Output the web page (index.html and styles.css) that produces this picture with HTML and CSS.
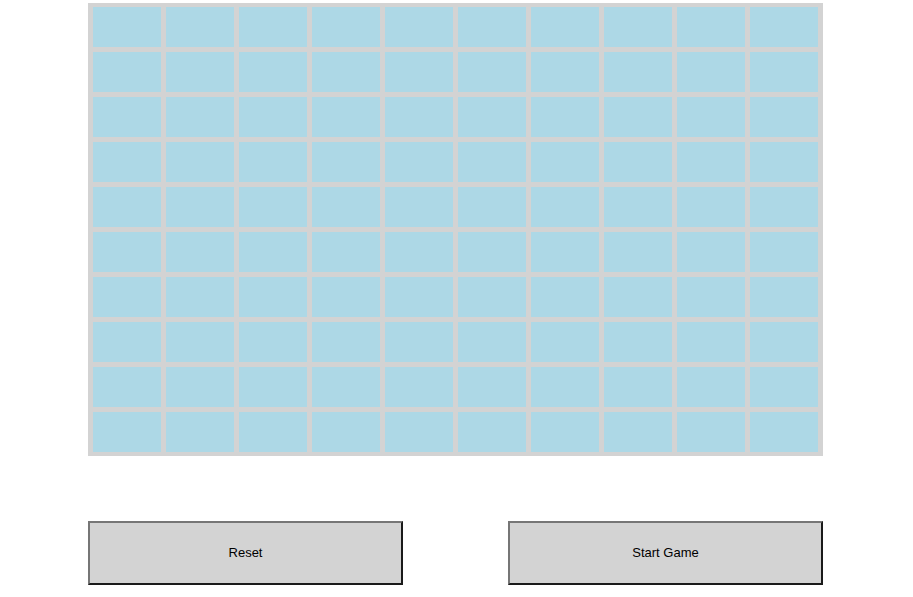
FILE: index.html
```html
<!DOCTYPE html>
<html lang="en">
<head>
<meta charset="UTF-8">
<meta name="viewport" content="width=device-width, initial-scale=1.0">
<title>Grid Game</title>
<link rel="stylesheet" href="styles.css">
</head>
<body>
<div class="game">
    <div class="board" id="board"></div>
    <div class="controls">
        <button class="btn" onclick="resetBoard()">Reset</button>
        <button class="btn" onclick="startGame()">Start Game</button>
    </div>
</div>

<script>
var board = document.getElementById("board");

function buildBoard() {
    board.innerHTML = "";
    for (var i = 0; i < 100; i++) {
        var cell = document.createElement("div");
        cell.className = "cell";
        board.appendChild(cell);
    }
}

function resetBoard() {
    buildBoard();
}

function startGame() {
    // nothing to do yet
}

buildBoard();
</script>
</body>
</html>
```

FILE: styles.css
```css
body {
    font-family: Arial, "Liberation Sans", sans-serif;
    margin: 0;
    padding: 0;
    background-color: #ffffff;
}
.game {
    width: 735px;
    margin: 3px 0 0 88px;
}
.board {
    display: grid;
    grid-template-columns: repeat(10, 68px);
    grid-auto-rows: 40px;
    gap: 5px;
    padding: 4px 5px;
    background-color: #d3d3d3;
}
.cell {
    background-color: #add8e6;
}
.controls {
    display: flex;
    justify-content: space-between;
    margin-top: 65px;
}
.btn {
    width: 315px;
    height: 64px;
    padding: 0 6px 2px;
    background-color: #d3d3d3;
    border: 2px solid;
    border-color: #767676 #1a1a1a #1a1a1a #767676;
    font-family: Arial, "Liberation Sans", sans-serif;
    font-size: 13px;
    color: #000;
    cursor: pointer;
}
```
